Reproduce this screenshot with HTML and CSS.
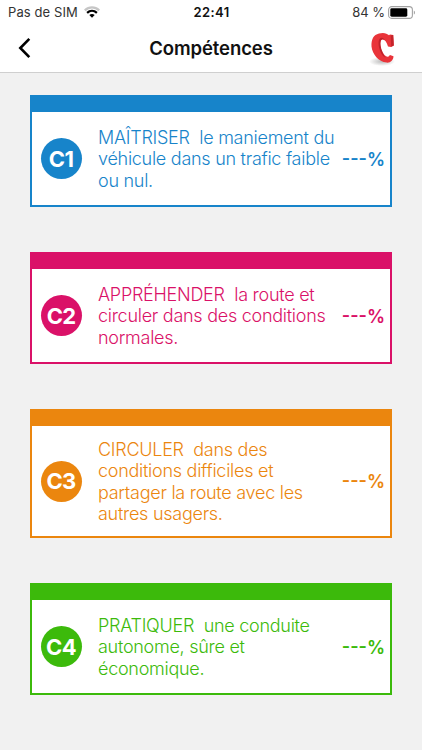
FILE: index.html
```html
<!DOCTYPE html>
<html lang="fr">
<head>
    <meta charset="UTF-8">
    <meta name="viewport" content="width=device-width, initial-scale=1.0">
    <title>Compétences</title>
    <link rel="stylesheet" href="styles.css">
</head>
<body>
    <header class="header">
        <div class="status-bar">
            <div class="carrier">
                <span class="carrier-name">Pas de SIM</span>
                <svg class="wifi" width="16" height="12" viewBox="0 0 16 12">
                    <path d="M.8 4.4C5 .4 11 .4 15.2 4.4" fill="none" stroke="#c6c6c6" stroke-width="2.2"/>
                    <path d="M3.1 6.9C6 4.2 10 4.2 12.9 6.9" fill="none" stroke="#000" stroke-width="2.2"/>
                    <path d="M8 11.8L5.3 9.1C6.9 7.7 9.1 7.7 10.7 9.1Z" fill="#000"/>
                </svg>
            </div>
            <span class="time">22:41</span>
            <div class="power">
                <span class="power-level">84 %</span>
                <svg class="battery" width="28" height="13" viewBox="0 0 28 13">
                    <rect x=".6" y=".6" width="23.8" height="11.8" rx="3.2" fill="#fff" stroke="#a3a3a3" stroke-width="1.1"/>
                    <rect x="2.3" y="2.3" width="17" height="8.4" rx="1.4" fill="#000"/>
                    <path d="M25.8 4.4C27.4 5 27.4 8 25.8 8.6Z" fill="#a3a3a3"/>
                </svg>
            </div>
        </div>
        <nav class="nav-bar">
            <svg class="back" width="14" height="22" viewBox="0 0 14 22">
                <path d="M12.3 1.8L3.3 11L12.3 20.2" fill="none" stroke="#000" stroke-width="2.6"/>
            </svg>
            <h1 class="title">Compétences</h1>
            <svg class="logo" width="30" height="36" viewBox="0 0 30 36">
                <defs>
                    <radialGradient id="shadow">
                        <stop offset="0" stop-color="#777" stop-opacity=".5"/>
                        <stop offset="1" stop-color="#777" stop-opacity="0"/>
                    </radialGradient>
                </defs>
                <ellipse cx="14" cy="30.500" rx="13" ry="4.500" fill="url(#shadow)"/>
                <path d="M11 2.500C15 1.200 19 2 21 4.300L22 3.500L25.200 4L25.800 14.500L23 16L20 15.500C18.500 10.500 16.500 8 14 8.500C11.500 9.500 11.800 15 13.500 19C15.500 24 18.500 26.500 20.500 25.500L22 24L25.500 25.200C25.500 29 22.500 32 18.500 31.600C10.500 30.500 4.500 23.500 3.500 15.500C3 8.500 5.500 3.800 11 2.500Z" fill="#e9343a"/>
                <path d="M13.500 6.800C11 7.500 10.300 10 10.600 13.500C11 18.500 13.500 24.500 17.500 26.800C15.300 23.500 13.300 19.500 12.700 15C12.300 11.500 12.500 9.300 14 8.500C15 8.100 16 8.500 16.800 9.200C16 7.500 15 6.600 13.500 6.800Z" fill="#c0222a"/>
                <path d="M22.700 4.500L25.200 4L25.800 14.500L23.200 15.800Z" fill="#c4242b"/>
            </svg>
        </nav>
    </header>

    <main class="cards">
        <section class="card blue">
            <div class="badge">C1</div>
            <p class="text">MAÎTRISER&nbsp; le maniement du<br>véhicule dans un trafic faible<br>ou nul.</p>
            <div class="score">---%</div>
        </section>
        <section class="card pink">
            <div class="badge">C2</div>
            <p class="text">APPRÉHENDER&nbsp; la route et<br>circuler dans des conditions<br>normales.</p>
            <div class="score">---%</div>
        </section>
        <section class="card orange">
            <div class="badge">C3</div>
            <p class="text">CIRCULER&nbsp; dans des<br>conditions difficiles et<br>partager la route avec les<br>autres usagers.</p>
            <div class="score">---%</div>
        </section>
        <section class="card green">
            <div class="badge">C4</div>
            <p class="text">PRATIQUER&nbsp; une conduite<br>autonome, sûre et<br>économique.</p>
            <div class="score">---%</div>
        </section>
    </main>
</body>
</html>
```
FILE: styles.css
```css
* {
    box-sizing: border-box;
}

body {
    margin: 0;
    min-height: 100vh;
    background: #f1f1f1;
    font-family: Inter, "Liberation Sans", sans-serif;
}

.header {
    height: 73px;
    background: #fff;
    border-bottom: 1px solid #cfcfcf;
}

/* Status bar */
.status-bar {
    display: grid;
    grid-template-columns: 1fr auto 1fr;
    align-items: center;
    height: 24px;
    padding: 0 7px 0 8px;
    font-size: 13px;
    color: #333;
}

.carrier,
.power {
    display: flex;
    align-items: center;
}

.carrier {
    gap: 6px;
}

.carrier-name {
    letter-spacing: 0.1px;
}

.power {
    justify-content: flex-end;
    gap: 3px;
}

.battery {
    margin-right: -1px;
}

.time {
    font-weight: 600;
    letter-spacing: 0.4px;
    color: #111;
}

/* Navigation bar */
.nav-bar {
    display: grid;
    grid-template-columns: 1fr auto 1fr;
    align-items: center;
    height: 48px;
    padding: 0 17px;
}

.title {
    margin: 0;
    font-size: 18.5px;
    font-weight: 600;
    letter-spacing: -0.1px;
    color: #111;
}

.logo {
    justify-self: end;
    margin: 2px 7px 0 0;
}

/* Cards */
.cards {
    display: flex;
    flex-direction: column;
    gap: 45px;
    padding: 22px 30px;
}

.card {
    display: flex;
    align-items: center;
    height: 112px;
    padding: 0 5px 0 9px;
    background: #fff;
    border: 2px solid;
    border-top-width: 17px;
}

.badge {
    display: flex;
    flex-shrink: 0;
    align-items: center;
    justify-content: center;
    width: 41px;
    height: 41px;
    margin-right: 16px;
    padding-right: 1px;
    border-radius: 50%;
    font-size: 22px;
    font-weight: 700;
    letter-spacing: -0.7px;
}

.text {
    flex: 1;
    margin: 0;
    padding-top: 1px;
    font-size: 18px;
    font-weight: 350;
    line-height: 21.5px;
    letter-spacing: -0.27px;
    white-space: nowrap;
}

.score {
    padding-top: 1px;
    font-size: 18px;
    font-weight: 600;
}

.blue {
    color: #1784ca;
    border-color: #1784ca;
}

.pink {
    color: #da1168;
    border-color: #da1168;
}

.orange {
    height: 129px;
    color: #eb860e;
    border-color: #eb860e;
}

.green {
    color: #3cba0b;
    border-color: #3cba0b;
}

.blue .badge {
    background: #1784ca;
}

.pink .badge {
    background: #da1168;
}

.orange .badge {
    background: #eb860e;
}

.green .badge {
    background: #3cba0b;
}

.card .badge {
    color: #fff;
}
```
